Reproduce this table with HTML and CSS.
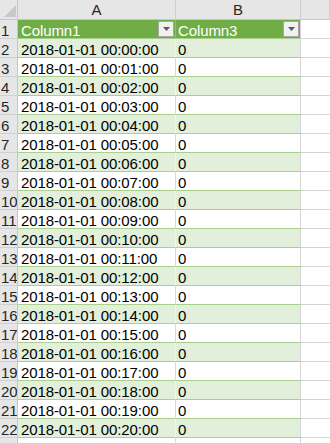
FILE: index.html
```html
<!DOCTYPE html>
<html>
<head>
<meta charset="utf-8">
<link rel="stylesheet" href="styles.css">
</head>
<body>
<div class="sheet">
  <div class="row colhead">
    <div class="corner"><svg width="18" height="19" viewBox="0 0 18 19"><polygon points="16,5 16,17 4,17" fill="#c9c9c9"/></svg></div>
    <div class="ch">A</div>
    <div class="ch">B</div>
    <div class="ch"></div>
  </div>
  <div class="row thead">
    <div class="rn">1</div>
    <div class="c a">Column1<span class="dd"><svg width="7" height="4" viewBox="0 0 7 4"><polygon points="0,0 7,0 3.5,4" fill="#595959"/></svg></span></div>
    <div class="c b">Column3<span class="dd"><svg width="7" height="4" viewBox="0 0 7 4"><polygon points="0,0 7,0 3.5,4" fill="#595959"/></svg></span></div>
    <div class="c x"></div>
  </div>
  <div class="row band"><div class="rn">2</div><div class="c a">2018-01-01 00:00:00</div><div class="c b">0</div><div class="c x"></div></div>
  <div class="row"><div class="rn">3</div><div class="c a">2018-01-01 00:01:00</div><div class="c b">0</div><div class="c x"></div></div>
  <div class="row band"><div class="rn">4</div><div class="c a">2018-01-01 00:02:00</div><div class="c b">0</div><div class="c x"></div></div>
  <div class="row"><div class="rn">5</div><div class="c a">2018-01-01 00:03:00</div><div class="c b">0</div><div class="c x"></div></div>
  <div class="row band"><div class="rn">6</div><div class="c a">2018-01-01 00:04:00</div><div class="c b">0</div><div class="c x"></div></div>
  <div class="row"><div class="rn">7</div><div class="c a">2018-01-01 00:05:00</div><div class="c b">0</div><div class="c x"></div></div>
  <div class="row band"><div class="rn">8</div><div class="c a">2018-01-01 00:06:00</div><div class="c b">0</div><div class="c x"></div></div>
  <div class="row"><div class="rn">9</div><div class="c a">2018-01-01 00:07:00</div><div class="c b">0</div><div class="c x"></div></div>
  <div class="row band"><div class="rn">10</div><div class="c a">2018-01-01 00:08:00</div><div class="c b">0</div><div class="c x"></div></div>
  <div class="row"><div class="rn">11</div><div class="c a">2018-01-01 00:09:00</div><div class="c b">0</div><div class="c x"></div></div>
  <div class="row band"><div class="rn">12</div><div class="c a">2018-01-01 00:10:00</div><div class="c b">0</div><div class="c x"></div></div>
  <div class="row"><div class="rn">13</div><div class="c a">2018-01-01 00:11:00</div><div class="c b">0</div><div class="c x"></div></div>
  <div class="row band"><div class="rn">14</div><div class="c a">2018-01-01 00:12:00</div><div class="c b">0</div><div class="c x"></div></div>
  <div class="row"><div class="rn">15</div><div class="c a">2018-01-01 00:13:00</div><div class="c b">0</div><div class="c x"></div></div>
  <div class="row band"><div class="rn">16</div><div class="c a">2018-01-01 00:14:00</div><div class="c b">0</div><div class="c x"></div></div>
  <div class="row"><div class="rn">17</div><div class="c a">2018-01-01 00:15:00</div><div class="c b">0</div><div class="c x"></div></div>
  <div class="row band"><div class="rn">18</div><div class="c a">2018-01-01 00:16:00</div><div class="c b">0</div><div class="c x"></div></div>
  <div class="row"><div class="rn">19</div><div class="c a">2018-01-01 00:17:00</div><div class="c b">0</div><div class="c x"></div></div>
  <div class="row band"><div class="rn">20</div><div class="c a">2018-01-01 00:18:00</div><div class="c b">0</div><div class="c x"></div></div>
  <div class="row"><div class="rn">21</div><div class="c a">2018-01-01 00:19:00</div><div class="c b">0</div><div class="c x"></div></div>
  <div class="row band"><div class="rn">22</div><div class="c a">2018-01-01 00:20:00</div><div class="c b">0</div><div class="c x"></div></div>
  <div class="row"><div class="rn"></div><div class="c a"></div><div class="c b"></div><div class="c x"></div></div>
</div>
</body>
</html>
```
FILE: styles.css
```css
html, body {
  margin: 0;
  padding: 0;
  background: #ffffff;
  overflow: hidden;
}
.sheet {
  width: 330px;
  height: 443px;
  overflow: hidden;
  font-family: "Liberation Sans", Arial, sans-serif;
  font-size: 15px;
  color: #000;
}
.row {
  display: grid;
  grid-template-columns: 18px 158px 125px 29px;
  height: 19px;
}
.colhead {
  height: 20px;
  background: #e6e6e6;
}
.corner {
  box-sizing: border-box;
  border-right: 1px solid #c6c6c6;
  border-bottom: 1px solid #c6c6c6;
  overflow: hidden;
}
.corner svg {
  display: block;
}
.ch {
  box-sizing: border-box;
  border-right: 1px solid #cfcfcf;
  border-bottom: 1px solid #c6c6c6;
  text-align: center;
  line-height: 18px;
  padding-top: 1px;
  color: #262626;
}
.rn {
  box-sizing: border-box;
  background: #e6e6e6;
  border-right: 1px solid #c6c6c6;
  border-bottom: 1px solid #d0d0d0;
  padding-left: 1px;
  line-height: 18px;
  padding-top: 2px;
  overflow: hidden;
  white-space: nowrap;
  color: #262626;
}
.c {
  box-sizing: border-box;
  position: relative;
  border-bottom: 1px solid #a9d08e;
  line-height: 18px;
  padding-top: 2px;
  padding-left: 3px;
  white-space: nowrap;
  overflow: hidden;
  letter-spacing: -0.1px;
}
.c.a {
  border-right: 1px solid #d9d9d9;
}
.c.b {
  border-right: 1px solid #d4d4d4;
  padding-left: 2px;
}
.c.x {
  border-bottom-color: #d4d4d4;
}
.band .c.a, .band .c.b {
  background: #e2efda;
}
.band .c.a {
  border-right-color: #f2f2f2;
}
.thead .c.a, .thead .c.b {
  background: #70ad47;
  color: #ffffff;
}
.thead .c.a {
  border-right-color: #8cbf6a;
}
.dd {
  position: absolute;
  right: 1px;
  top: 1px;
  width: 16px;
  height: 16px;
  box-sizing: border-box;
  background: #f1f1f1;
  border: 1px solid #a6a6a6;
  display: flex;
  align-items: center;
  justify-content: center;
}
.dd svg {
  display: block;
}
```
